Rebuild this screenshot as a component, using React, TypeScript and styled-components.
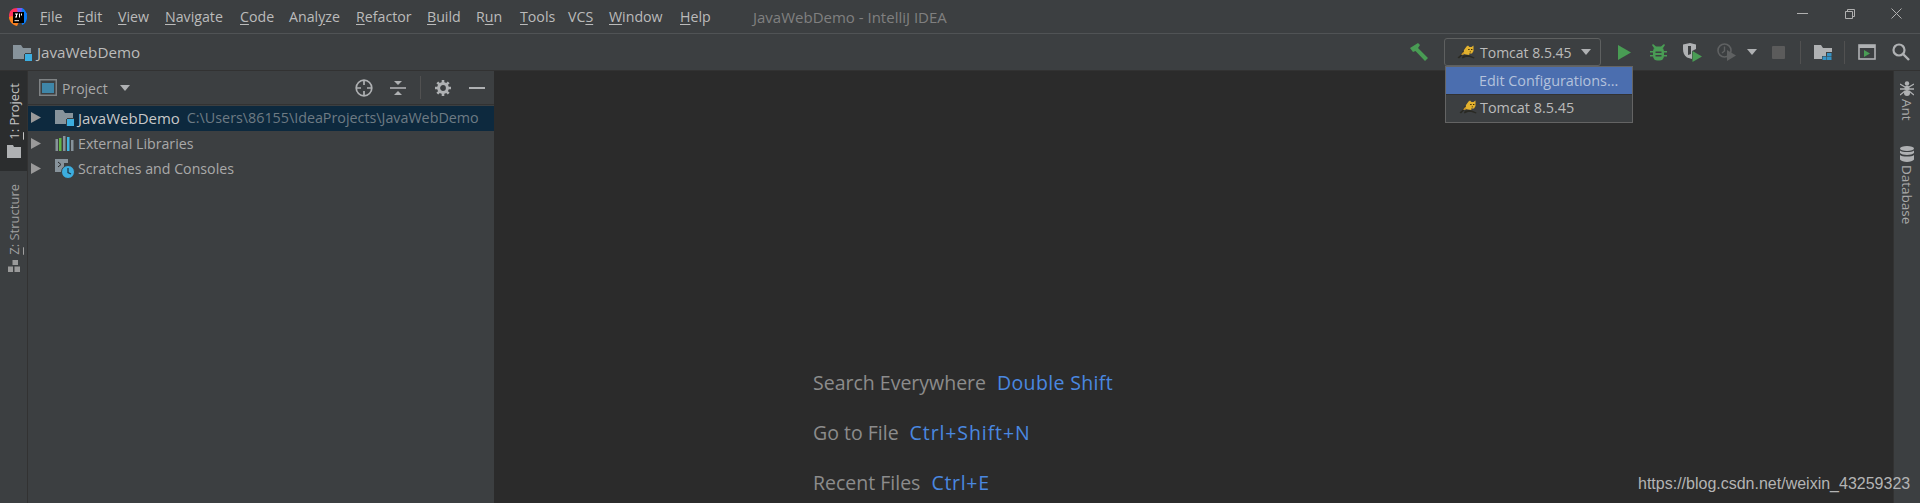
import React from "react";
import styled, { createGlobalStyle } from "styled-components";

const GlobalStyle = createGlobalStyle`
  html, body { margin: 0; padding: 0; background: #3c3f41; overflow: hidden; }
  * { box-sizing: border-box; }
`;

const FONT = `"Open Sans", "Noto Sans", sans-serif`;

const Page = styled.div`
  width: 1920px;
  height: 503px;
  position: relative;
  overflow: hidden;
  display: flex;
  flex-direction: column;
  background: #3c3f41;
  color: #bbbbbb;
  font-family: ${FONT};
`;

const TitleBar = styled.div`
  height: 34px;
  flex: none;
  display: flex;
  align-items: center;
  padding-left: 9px;
  border-bottom: 1px solid #505355;
  font-size: 14.2px;
`;

const LogoBox = styled.div`
  width: 31px;
  height: 18px;
  flex: none;
  display: flex;
`;

const MenuItem = styled.div<{ $w: number }>`
  width: ${({ $w }) => $w}px;
  flex: none;
  white-space: nowrap;
  u { text-underline-offset: 2px; }
`;

const WindowTitle = styled.div`
  color: #808080;
  font-size: 15px;
  white-space: nowrap;
  flex: 1;
`;

const WindowButtons = styled.div`
  display: flex;
  align-items: center;
  height: 100%;
`;

const WindowButton = styled.div`
  width: 47px;
  height: 28px;
  margin-top: -6px;
  display: flex;
  align-items: center;
  justify-content: center;
`;

const NavBar = styled.div`
  height: 37px;
  flex: none;
  display: flex;
  align-items: center;
  padding: 0 2px 0 13px;
  border-bottom: 1px solid #323232;
`;

const Crumb = styled.div`
  display: flex;
  align-items: center;
  gap: 5px;
  flex: 1;
  font-size: 15.2px;
  white-space: nowrap;
`;

const ToolSlot = styled.div<{ $w?: number; $mr?: number }>`
  width: ${({ $w }) => $w ?? 34}px;
  margin-right: ${({ $mr }) => $mr ?? 0}px;
  height: 28px;
  flex: none;
  display: flex;
  align-items: center;
  justify-content: center;
`;

const ToolSep = styled.div`
  width: 1px;
  height: 23px;
  margin: 0 5px;
  background: #515151;
  flex: none;
`;

const RunConfig = styled.div`
  width: 157px;
  height: 28px;
  margin-right: 6px;
  padding: 0 9px 0 12px;
  flex: none;
  display: flex;
  align-items: center;
  border: 1px solid #5e6060;
  border-radius: 3px;
  font-size: 14px;
  white-space: nowrap;
`;

const RunLabel = styled.span`
  margin-left: 5px;
  flex: 1;
`;

const Main = styled.div`
  flex: 1;
  min-height: 0;
  display: flex;
`;

const LeftStrip = styled.div`
  width: 28px;
  flex: none;
  border-right: 1px solid #323232;
  display: flex;
  flex-direction: column;
`;

const StripTab = styled.div<{ $active?: boolean; $h: number }>`
  height: ${({ $h }) => $h}px;
  background: ${({ $active }) => ($active ? "#2b2d2e" : "transparent")};
  color: ${({ $active }) => ($active ? "#c4c4c4" : "#a0a0a0")};
  display: flex;
  flex-direction: column;
  align-items: center;
  padding-top: ${({ $active }) => ($active ? 12 : 13)}px;
  gap: 5px;
`;

const TabTextUp = styled.div`
  writing-mode: vertical-rl;
  transform: rotate(180deg);
  font-size: 13px;
  line-height: 16px;
  white-space: nowrap;
  u { text-underline-offset: 2px; }
`;

const ProjectPanel = styled.div`
  width: 466px;
  flex: none;
  display: flex;
  flex-direction: column;
`;

const PanelHeader = styled.div`
  height: 34px;
  flex: none;
  display: flex;
  align-items: center;
  padding-left: 11px;
  border-bottom: 1px solid #323232;
  margin-bottom: 1px;
  font-size: 14px;
  color: #a9a9a9;
`;

const PanelTitle = styled.span`
  margin-left: 5px;
  padding-top: 1px;
  width: 58px;
`;

const PanelSpacer = styled.div`
  flex: 1;
`;

const PanelTool = styled.div`
  width: 34px;
  height: 28px;
  flex: none;
  display: flex;
  align-items: center;
  justify-content: center;
`;

const PanelSep = styled.div`
  width: 1px;
  height: 23px;
  margin: 0 5px;
  background: #515151;
`;

const TreeRow = styled.div<{ $selected?: boolean }>`
  height: 25px;
  flex: none;
  display: flex;
  align-items: center;
  padding-left: 3px;
  padding-bottom: ${({ $selected }) => ($selected ? 2 : 0)}px;
  background: ${({ $selected }) => ($selected ? "#0d293e" : "transparent")};
  color: ${({ $selected }) => ($selected ? "#c8c8c8" : "#a9a9a9")};
  font-size: ${({ $selected }) => ($selected ? 15 : 14.2)}px;
  white-space: nowrap;
`;

const TreeIcon = styled.div`
  width: 19px;
  height: 19px;
  margin: 0 4px 0 14px;
  flex: none;
`;

const TreePath = styled.span`
  margin-left: 7px;
  font-size: 14.3px;
  color: #6e7b84;
`;

const Editor = styled.div`
  flex: 1;
  min-width: 0;
  background: #2b2b2b;
  padding: 286px 0 0 319px;
  overflow: hidden;
`;

const HintRow = styled.div`
  height: 50px;
  display: flex;
  align-items: center;
  gap: 11px;
  font-size: 19.5px;
  color: #8c8c8c;
  white-space: nowrap;
`;

const HintKey = styled.span<{ $ls: number }>`
  color: #4a88e0;
  letter-spacing: ${({ $ls }) => $ls}px;
`;

const RightStrip = styled.div`
  width: 27px;
  flex: none;
  border-left: 1px solid #323232;
  display: flex;
  flex-direction: column;
  align-items: center;
  padding-top: 10px;
  color: #a9a9a9;
`;

const RightTab = styled.div<{ $mb: number }>`
  display: flex;
  flex-direction: column;
  align-items: center;
  gap: 3px;
  margin-bottom: ${({ $mb }) => $mb}px;
`;

const TabTextDown = styled.div`
  writing-mode: vertical-rl;
  font-size: 13.5px;
  line-height: 16px;
  white-space: nowrap;
`;

const RunMenu = styled.div`
  position: absolute;
  left: 1445px;
  top: 66px;
  width: 188px;
  height: 57px;
  background: #3c3f41;
  border: 1px solid #646464;
  font-size: 14.4px;
`;

const RunMenuItem = styled.div<{ $active?: boolean }>`
  height: 27.5px;
  display: flex;
  align-items: center;
  padding-left: 33px;
  padding-bottom: ${({ $active }) => ($active ? 0 : 2)}px;
  background: ${({ $active }) => ($active ? "#4b6eaf" : "transparent")};
  color: ${({ $active }) => ($active ? "#b4c2dc" : "#bbbbbb")};
  border-bottom: ${({ $active }) => ($active ? "1px solid #323232" : "none")};
  white-space: nowrap;
`;

const RunMenuIcon = styled.span`
  display: flex;
  margin: 0 3px 0 -20px;
`;

const Watermark = styled.div`
  position: absolute;
  left: 1638px;
  top: 475px;
  font-family: "Liberation Sans", Arial, sans-serif;
  font-size: 16px;
  line-height: 18px;
  color: #b4b4b4;
`;

const Logo = () => (
  <svg width="18" height="18" viewBox="0 0 18 18">
    <path d="M0 8 C0 3 3 0 8 0 L11 3 L6 12 L2 14 Z" fill="#fe315d" />
    <path d="M8 0 L13 0 L18 6 L15 10 L9 7 Z" fill="#7b5bf0" />
    <path d="M13 0 C17 2 18 6 18 9 C18 13 16 16 13 17 L12 8 Z" fill="#087cfa" />
    <path d="M0 9 C0 13 3 17 8 18 L10 14 L3 8 Z" fill="#fc801d" />
    <rect x="4" y="4" width="11" height="11" fill="#000" />
    <rect x="5.5" y="12.2" width="4.5" height="1" fill="#fff" />
    <path d="M6 5.5 H9 V6.5 H8 V9.5 H6 V8.5 H7 V6.5 H6 Z M10 5.5 H11 V9.5 H10 Z M12 5.5 H13 V7.5 H12 Z" fill="#fff" />
  </svg>
);

const ProjectFolder = () => (
  <svg width="19" height="19" viewBox="0 0 19 19">
    <path d="M0 2 H8 L10 5 H18 V13 H11 V16 H0 Z" fill="#87939b" />
    <rect x="12" y="11" width="7" height="7" fill="#3caee0" />
    <path d="M11 11 H12 V18 H11 Z M12 10 H19 V11 H12 Z" fill="#3c3f41" />
  </svg>
);

const Triangle = ({ size = 10, color = "#9a9a9a" }: { size?: number; color?: string }) => (
  <svg width={size} height={size + 1} viewBox="0 0 10 11">
    <path d="M0 0 L10 5.5 L0 11 Z" fill={color} />
  </svg>
);

const ChevronDown = ({ w = 10 }: { w?: number }) => (
  <svg width={w} height="6" viewBox="0 0 10 6">
    <path d="M0 0 H10 L5 6 Z" fill="#afb1b3" />
  </svg>
);

const TomcatIcon = () => (
  <svg width="18" height="14" viewBox="0 0 18 14">
    <path d="M9.5 1.5 L11 0.5 L12.5 2 H14.5 L16.5 0.5 L16.5 6 L15 8.5 H12 L12.5 10 L9 9.5 L7 9 L5.5 9.5 L7 5 Z" fill="#e3b22e" />
    <path d="M0.5 12.5 L4 9.5 L6 5.5 L7 6 L5.5 10 L2 13.5 Z" fill="#2a2a24" />
    <path d="M6 10.5 L10 10 L13 10.5 L17.5 12.5 L17 13.5 L12.5 12 L9 12 L5.5 13.5 L5 12.5 Z" fill="#2a2a24" />
    <path d="M4 9.5 L6.5 6.5 L7.5 9 L5.5 10 Z" fill="#c9962a" />
    <path d="M11.2 4 H12.6 V5 H11.2 Z M14 4 H15.4 V5 H14 Z M12.7 6.5 H14 V7.3 H12.7 Z" fill="#3b2a00" />
  </svg>
);

const BuildIcon = () => (
  <svg width="19" height="18" viewBox="0 0 19 18">
    <path d="M0 5 L8 0 L10 2 L8 5 L18 15 L15 18 L5.5 8 L3 9 Z" fill="#499c54" />
  </svg>
);

const PlayIcon = () => (
  <svg width="13" height="15" viewBox="0 0 13 15">
    <path d="M0 0 L13 7.5 L0 15 Z" fill="#499c54" />
  </svg>
);

const BugIcon = () => (
  <svg width="17" height="17" viewBox="0 0 17 17">
    <path d="M3 0 L6 2.5 H11 L14 0 L15 1 L13 4 H4 L2 1 Z" fill="#499c54" />
    <rect x="3" y="3" width="11" height="13.5" rx="4.5" fill="#499c54" />
    <path d="M0 7 H3 V8.5 H0 Z M14 7 H17 V8.5 H14 Z M0 11 H3 V12.5 H0 Z M14 11 H17 V12.5 H14 Z" fill="#499c54" />
    <path d="M5.5 7.5 H11.5 V9 H5.5 Z M5.5 11 H11.5 V12.5 H5.5 Z" fill="#3c3f41" />
  </svg>
);

const CoverageIcon = () => (
  <svg width="19" height="19" viewBox="0 0 19 19">
    <path d="M0 1.5 L7 0 L13 1.5 V6 L9 8 V16 L4 14.5 C1 12.5 0 9.5 0 6 Z" fill="#afb1b3" />
    <path d="M5 3 H8 V11 L5 12 Z" fill="#3c3f41" />
    <path d="M9.5 8 L19 13.5 L9.5 19 Z" fill="#499c54" />
  </svg>
);

const ProfilerIcon = () => (
  <svg width="19" height="18" viewBox="0 0 19 18">
    <circle cx="7.5" cy="7.5" r="6.5" fill="none" stroke="#5f6162" strokeWidth="1.6" />
    <path d="M7.5 3.5 V8 L5 10" fill="none" stroke="#5f6162" strokeWidth="1.4" />
    <path d="M10 7 L19 12.5 L10 18 Z" fill="#5f6162" />
  </svg>
);

const StopIcon = () => (
  <svg width="13" height="13" viewBox="0 0 13 13">
    <rect width="13" height="13" rx="1" fill="#5b5b5b" />
  </svg>
);

const ProjectStructureIcon = () => (
  <svg width="18" height="16" viewBox="0 0 18 16">
    <path d="M0 1 H7 L9 4 H18 V8 H12 V12 H8 V15 H0 Z" fill="#afb1b3" />
    <path d="M13 9 H17.5 V12 H13 Z M8.5 12.5 H12.5 V16 H8.5 Z M13 12.5 H17.5 V16 H13 Z" fill="#3592c4" />
  </svg>
);

const TerminalIcon = () => (
  <svg width="18" height="16" viewBox="0 0 18 16">
    <rect x="1" y="1" width="16" height="14" fill="none" stroke="#afb1b3" strokeWidth="1.6" />
    <rect x="1" y="1" width="16" height="3" fill="#afb1b3" />
    <path d="M6 6 L12 9.5 L6 13 Z" fill="#499c54" />
  </svg>
);

const SearchIcon = () => (
  <svg width="18" height="18" viewBox="0 0 18 18">
    <circle cx="7" cy="7" r="5.5" fill="none" stroke="#afb1b3" strokeWidth="2.2" />
    <path d="M11 11 L17 17" stroke="#afb1b3" strokeWidth="2.4" />
  </svg>
);

const PanelWindowIcon = () => (
  <svg width="18" height="17" viewBox="0 0 18 17">
    <rect x="0.75" y="0.75" width="16.5" height="15.5" fill="#3c3f41" stroke="#7f8385" strokeWidth="1.5" />
    <rect x="3" y="4" width="12" height="10" fill="#3f86a8" />
  </svg>
);

const LocateIcon = () => (
  <svg width="18" height="18" viewBox="0 0 18 18">
    <circle cx="9" cy="9" r="7.8" fill="none" stroke="#afb1b3" strokeWidth="1.7" />
    <path d="M9 1 V6 M9 12 V17 M1 9 H6 M12 9 H17" stroke="#afb1b3" strokeWidth="1.7" />
  </svg>
);

const CollapseIcon = () => (
  <svg width="16" height="16" viewBox="0 0 16 16">
    <path d="M0 7.2 H16 V8.8 H0 Z" fill="#afb1b3" />
    <path d="M4 1 H12 L8 5 Z M8 11 L12 15 H4 Z" fill="#afb1b3" />
  </svg>
);

const GearIcon = () => (
  <svg width="16" height="16" viewBox="0 0 16 16">
    <circle cx="8" cy="8" r="4.4" fill="none" stroke="#afb1b3" strokeWidth="3" />
    <path d="M8 0 V3 M8 13 V16 M0 8 H3 M13 8 H16 M2.3 2.3 L4.4 4.4 M11.6 11.6 L13.7 13.7 M13.7 2.3 L11.6 4.4 M4.4 11.6 L2.3 13.7" stroke="#afb1b3" strokeWidth="2.6" />
  </svg>
);

const MinusIcon = () => (
  <svg width="16" height="2" viewBox="0 0 16 2">
    <rect width="16" height="2" fill="#afb1b3" />
  </svg>
);

const LibrariesIcon = () => (
  <svg width="19" height="19" viewBox="0 0 19 19">
    <rect x="0.5" y="5" width="2.5" height="12" fill="#87939b" />
    <rect x="4" y="4" width="2.5" height="13" fill="#62b543" />
    <rect x="8" y="2" width="2.5" height="15" fill="#87939b" />
    <rect x="12" y="3" width="2.5" height="14" fill="#40b6e0" />
    <rect x="16" y="6" width="2.5" height="11" fill="#87939b" />
  </svg>
);

const ScratchIcon = () => (
  <svg width="20" height="20" viewBox="0 0 20 20">
    <path d="M0 0 H13 V4 H9 V13 H0 Z" fill="#87939b" />
    <path d="M3 3 L6 5.5 L3 8" fill="none" stroke="#2b2b2b" strokeWidth="1" />
    <circle cx="13" cy="13" r="6.5" fill="#3caee0" stroke="#3c3f41" strokeWidth="1" />
    <path d="M13 9 V13.5 L16 15" fill="none" stroke="#1d3a4a" strokeWidth="1.3" />
  </svg>
);

const FolderTabIcon = () => (
  <svg width="14" height="13" viewBox="0 0 14 13">
    <path d="M0 0 H6 L7 2 H14 V13 H0 Z" fill="#afb1b3" />
  </svg>
);

const StructureTabIcon = () => (
  <svg width="12" height="12" viewBox="0 0 12 12">
    <path d="M4.5 0 H10 V5 H4.5 Z M0 6.5 H5 V12 H0 Z M6.5 6.5 H12 V12 H6.5 Z" fill="#9a9a9a" />
  </svg>
);

const AntIcon = () => (
  <svg width="14" height="15" viewBox="0 0 14 15">
    <circle cx="7" cy="2.5" r="2.2" fill="#afb1b3" />
    <ellipse cx="7" cy="7" rx="2.6" ry="2.2" fill="#afb1b3" />
    <ellipse cx="7" cy="12" rx="3" ry="3" fill="#afb1b3" />
    <path d="M0 3 L5 6 M14 3 L9 6 M0 8 H14 M0 14 L5 10 M14 14 L9 10" stroke="#afb1b3" strokeWidth="1.3" />
  </svg>
);

const DatabaseIcon = () => (
  <svg width="14" height="16" viewBox="0 0 14 16">
    <ellipse cx="7" cy="2.5" rx="7" ry="2.5" fill="#afb1b3" />
    <path d="M0 4.5 C2 6.5 12 6.5 14 4.5 V7 C12 9.5 2 9.5 0 7 Z" fill="#afb1b3" />
    <path d="M0 9 C2 11 12 11 14 9 V13.5 C12 16.7 2 16.7 0 13.5 Z" fill="#afb1b3" />
  </svg>
);

const WindowMin = () => (
  <svg width="11" height="1" viewBox="0 0 11 1"><rect width="11" height="1" fill="#b0b0b0" /></svg>
);

const WindowRestore = () => (
  <svg width="10" height="10" viewBox="0 0 10 10">
    <path d="M2.5 2.5 V0.5 H9.5 V7.5 H7.5 M0.5 2.5 H7.5 V9.5 H0.5 Z" fill="none" stroke="#b0b0b0" strokeWidth="1" />
  </svg>
);

const WindowClose = () => (
  <svg width="11" height="11" viewBox="0 0 11 11">
    <path d="M0.5 0.5 L10.5 10.5 M10.5 0.5 L0.5 10.5" stroke="#b0b0b0" strokeWidth="1" />
  </svg>
);

const MENUS: { pre: string; key: string; post: string; w: number }[] = [
  { pre: "", key: "F", post: "ile", w: 37 },
  { pre: "", key: "E", post: "dit", w: 41 },
  { pre: "", key: "V", post: "iew", w: 47 },
  { pre: "", key: "N", post: "avigate", w: 75 },
  { pre: "", key: "C", post: "ode", w: 49 },
  { pre: "Anal", key: "y", post: "ze", w: 67 },
  { pre: "", key: "R", post: "efactor", w: 71 },
  { pre: "", key: "B", post: "uild", w: 49 },
  { pre: "R", key: "u", post: "n", w: 44 },
  { pre: "", key: "T", post: "ools", w: 48 },
  { pre: "VC", key: "S", post: "", w: 41 },
  { pre: "", key: "W", post: "indow", w: 71 },
  { pre: "", key: "H", post: "elp", w: 73 },
];

const HINTS = [
  { label: "Search Everywhere", keys: "Double Shift", ls: 0.35 },
  { label: "Go to File", keys: "Ctrl+Shift+N", ls: 0.9 },
  { label: "Recent Files", keys: "Ctrl+E", ls: 0.7 },
];

export default function App() {
  return (
    <Page>
      <GlobalStyle />
      <TitleBar>
        <LogoBox><Logo /></LogoBox>
        {MENUS.map((m) => (
          <MenuItem key={m.pre + m.key} $w={m.w}>
            {m.pre}<u>{m.key}</u>{m.post}
          </MenuItem>
        ))}
        <WindowTitle>JavaWebDemo - IntelliJ IDEA</WindowTitle>
        <WindowButtons>
          <WindowButton><WindowMin /></WindowButton>
          <WindowButton><WindowRestore /></WindowButton>
          <WindowButton><WindowClose /></WindowButton>
        </WindowButtons>
      </TitleBar>

      <NavBar>
        <Crumb><ProjectFolder />JavaWebDemo</Crumb>
        <ToolSlot $mr={8}><BuildIcon /></ToolSlot>
        <RunConfig>
          <TomcatIcon />
          <RunLabel>Tomcat 8.5.45</RunLabel>
          <ChevronDown />
        </RunConfig>
        <ToolSlot><PlayIcon /></ToolSlot>
        <ToolSlot><BugIcon /></ToolSlot>
        <ToolSlot><CoverageIcon /></ToolSlot>
        <ToolSlot><ProfilerIcon /></ToolSlot>
        <ToolSlot $w={18}><ChevronDown /></ToolSlot>
        <ToolSlot><StopIcon /></ToolSlot>
        <ToolSep />
        <ToolSlot $w={33}><ProjectStructureIcon /></ToolSlot>
        <ToolSep />
        <ToolSlot><TerminalIcon /></ToolSlot>
        <ToolSlot><SearchIcon /></ToolSlot>
      </NavBar>

      <Main>
        <LeftStrip>
          <StripTab $active $h={100}>
            <TabTextUp><u>1</u>: Project</TabTextUp>
            <FolderTabIcon />
          </StripTab>
          <StripTab $h={110}>
            <TabTextUp><u>Z</u>: Structure</TabTextUp>
            <StructureTabIcon />
          </StripTab>
        </LeftStrip>

        <ProjectPanel>
          <PanelHeader>
            <PanelWindowIcon />
            <PanelTitle>Project</PanelTitle>
            <ChevronDown />
            <PanelSpacer />
            <PanelTool><LocateIcon /></PanelTool>
            <PanelTool><CollapseIcon /></PanelTool>
            <PanelSep />
            <PanelTool><GearIcon /></PanelTool>
            <PanelTool><MinusIcon /></PanelTool>
          </PanelHeader>
          <TreeRow $selected>
            <Triangle />
            <TreeIcon><ProjectFolder /></TreeIcon>
            JavaWebDemo
            <TreePath>C:\Users\86155\IdeaProjects\JavaWebDemo</TreePath>
          </TreeRow>
          <TreeRow>
            <Triangle />
            <TreeIcon><LibrariesIcon /></TreeIcon>
            External Libraries
          </TreeRow>
          <TreeRow>
            <Triangle />
            <TreeIcon><ScratchIcon /></TreeIcon>
            Scratches and Consoles
          </TreeRow>
        </ProjectPanel>

        <Editor>
          {HINTS.map((h) => (
            <HintRow key={h.label}>
              {h.label}
              <HintKey $ls={h.ls}>{h.keys}</HintKey>
            </HintRow>
          ))}
        </Editor>

        <RightStrip>
          <RightTab $mb={25}>
            <AntIcon />
            <TabTextDown>Ant</TabTextDown>
          </RightTab>
          <RightTab $mb={0}>
            <DatabaseIcon />
            <TabTextDown>Database</TabTextDown>
          </RightTab>
        </RightStrip>
      </Main>

      <RunMenu>
        <RunMenuItem $active>Edit Configurations...</RunMenuItem>
        <RunMenuItem>
          <RunMenuIcon><TomcatIcon /></RunMenuIcon>
          Tomcat 8.5.45
        </RunMenuItem>
      </RunMenu>

      <Watermark>https://blog.csdn.net/weixin_43259323</Watermark>
    </Page>
  );
}
